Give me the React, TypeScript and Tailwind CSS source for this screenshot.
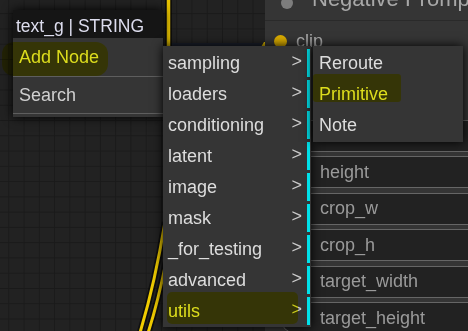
import React from "react";

const sub = ["sampling", "loaders", "conditioning", "latent", "image", "mask", "_for_testing", "advanced", "utils"];
const third = ["Reroute", "Primitive", "Note"];
const widgets = ["width", "height", "crop_w", "crop_h", "target_width", "target_height"];

export default function App() {
  return (
    <div className="relative w-[468px] h-[331px] overflow-hidden bg-[#222222] bg-[linear-gradient(to_right,#1a1a1a_1px,transparent_1px),linear-gradient(to_bottom,#1a1a1a_1px,transparent_1px)] bg-[size:15.28px_15.28px] bg-[position:8.3px_13.2px] font-['Liberation_Sans',Arial,sans-serif]">
      {/* partially visible node behind menus */}
      <div className="absolute left-[170px] top-[43px] w-[92px] h-[8px] bg-[#1b202c]" />

      {/* links */}
      <svg className="absolute left-0 top-0" width="468" height="331" viewBox="0 0 468 331">
        <path d="M168.5 -5 L168.5 60" stroke="#000" strokeOpacity="0.55" strokeWidth="7" fill="none" />
        <path d="M168.5 -5 L168.5 60" stroke="#e8c300" strokeWidth="3.5" fill="none" />
        <path d="M261 47 L264 42 L268 42 L268 47 Z" fill="#d9b400" />
        <path d="M139 336 C150 300, 158 265, 165 222" stroke="#000" strokeOpacity="0.55" strokeWidth="6.5" fill="none" />
        <path d="M139 336 C150 300, 158 265, 165 222" stroke="#f0cc00" strokeWidth="3" fill="none" />
        <path d="M147 336 C155 312, 160 292, 166 262" stroke="#000" strokeOpacity="0.55" strokeWidth="6.5" fill="none" />
        <path d="M147 336 C155 312, 160 292, 166 262" stroke="#f0cc00" strokeWidth="3" fill="none" />
      </svg>

      {/* Node */}
      <div className="absolute left-[265px] top-[-12px] w-[240px] h-[360px] bg-[#353535] flex flex-col">
        <div className="h-[33px] shrink-0 flex items-start border-b border-[#2a2a2a]">
          <div className="mt-[9px] ml-[16px] w-[12px] h-[12px] rounded-full bg-[#7d7d7d] shrink-0" />
          <div className="ml-[19px] text-[22px] leading-[22px] text-[#a8a8a8] whitespace-nowrap">Negative Prompt</div>
        </div>
        <div className="mt-[8px] h-[24px] flex items-center">
          <div className="ml-[9px] w-[13px] h-[13px] rounded-full bg-[#d9ab00] shrink-0" />
          <div className="ml-[9px] text-[18px] text-[#aaaaaa]">clip</div>
        </div>
        <div className="mt-[66.5px] px-[15px] flex flex-col gap-[4.5px]">
          {widgets.map((w) => (
            <div key={w} className="h-[32px] shrink-0 rounded-full border border-[#666666] bg-[#222222] flex items-center pl-[39px] text-[18px] text-[#9a9a9a]">
              {w}
            </div>
          ))}
        </div>
      </div>

      {/* Left context menu */}
      <div className="absolute left-[13px] top-[10px] w-[150px] bg-[#353535] shadow-[0_0_10px_#000] pb-[3px]">
        <div className="h-[28px] bg-[#151515] pl-[3px] pt-[4px] flex items-center text-[17.5px] text-[#dde] whitespace-nowrap">
          text_g | STRING
        </div>
        <div className="h-[38px] flex items-center pl-[6px] text-[18px] text-[#dddddd]">Add Node</div>
        <div className="h-px bg-[#5e5e5e]" />
        <div className="h-[36px] flex items-center pl-[6px] text-[18px] text-[#d0d0d0]">Search</div>
        <div className="h-px bg-[#5e5e5e]" />
      </div>

      {/* Sub menu */}
      <div className="absolute left-[163px] top-[46px] w-[148px] bg-[#353535] shadow-[0_0_10px_#000] pt-[3px] pb-[2px] flex flex-col gap-[3px]">
        {sub.map((s) => (
          <div key={s} className="h-[28px] mr-[1px] flex items-center justify-between pl-[5px] pr-[5px] border-r-[3px] border-[#00e1ea] text-[18px] text-[#dddddd]">
            <span>{s}</span>
            <span className="text-[#cccccc] -mt-[4px]">&gt;</span>
          </div>
        ))}
      </div>

      {/* Third menu */}
      <div className="absolute left-[313px] top-[46px] w-[150px] bg-[#353535] shadow-[0_0_10px_#000] pt-[3px] pb-[3px] flex flex-col gap-[3px]">
        {third.map((s) => (
          <div key={s} className="h-[28px] flex items-center pl-[6px] text-[18px] text-[#dddddd]">
            {s}
          </div>
        ))}
      </div>

      {/* highlighter marks */}
      <div className="absolute left-[2px] top-[42px] w-[106px] h-[34px] rounded-[12px] bg-[#ffff20] mix-blend-multiply" />
      <div className="absolute left-[313px] top-[74px] w-[88px] h-[28px] rounded-[3px] bg-[#ffff20] mix-blend-multiply" />
      <div className="absolute left-[167px] top-[292px] w-[131px] h-[32px] rounded-[5px] bg-[#ffff20] mix-blend-multiply" />
    </div>
  );
}
